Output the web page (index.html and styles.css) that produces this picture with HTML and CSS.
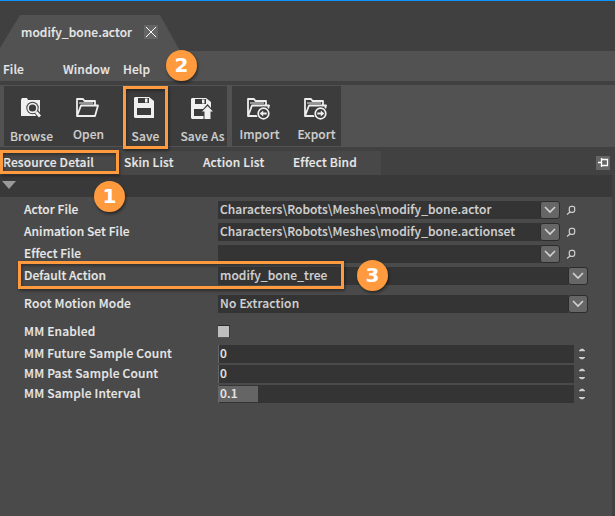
FILE: index.html
```html
<!DOCTYPE html>
<html lang="en">
<head>
<meta charset="utf-8">
<title>modify_bone.actor</title>
<link rel="stylesheet" href="styles.css">
</head>
<body>
<svg class="defs" width="0" height="0" aria-hidden="true">
  <symbol id="chevron" viewBox="0 0 20 18"><path d="M5 6l5 5 5-5" fill="none" stroke="#d2d2d2" stroke-width="1.6"/></symbol>
  <symbol id="search" viewBox="0 0 10 11"><rect x="3.300" y="1.300" width="5.400" height="6" rx="2" fill="none" stroke="#d0d0d0" stroke-width="1.200"/><path d="M4 7L1 9.500" stroke="#d0d0d0" stroke-width="1.200"/></symbol>
  <symbol id="spin" viewBox="0 0 6 12"><path d="M0 3.2V2.5L2 .8h2l2 1.7v.7zM0 9v.7l2 1.6h2l2-1.6V9z" fill="#cfcfcf"/></symbol>
  <symbol id="folder" viewBox="0 0 24 24"><path d="M2 20V3h6l1.500 2H20v4M2 20l4-10.500h17L20 20z" fill="none" stroke="#eee" stroke-width="1.800" stroke-linejoin="round"/><path d="M4 7h14" stroke="#eee" stroke-width="1"/></symbol>
  <symbol id="disk" viewBox="0 0 24 24"><path d="M3 2h14l5 4v17H3L2 22V3zM6 3v5h11V3zM5 13v7h14v-7z" fill="#f0f0f0" fill-rule="evenodd"/><path d="M13 3.500h2.500v4H13z" fill="#f0f0f0"/></symbol>
</svg>
<div class="app">
  <header class="titlebar">
    <div class="doc-tab"><span>modify_bone.actor</span><span class="close"><svg width="14" height="14"><path d="M2 2l10 10M12 2L2 12" stroke="#fff" stroke-width="1"/></svg></span></div>
  </header>
  <nav class="menu"><span class="m-file">File</span><span class="m-window">Window</span><span>Help</span><b class="badge badge-two">2</b></nav>
  <div class="toolbar">
    <div class="group wide">
      <div class="tool browse"><svg width="24" height="24" viewBox="0 0 24 24"><path d="M2 4l1-2h5l1 2h12v16H2z" fill="#f0f0f0"/><circle cx="13.5" cy="12" r="6.2" fill="#3c3c3c"/><path d="M17 15.5l4 5" stroke="#3c3c3c" stroke-width="5"/><circle cx="13.5" cy="12" r="4.4" fill="none" stroke="#f0f0f0" stroke-width="1.6"/><path d="M17 15.8l4 4.7" stroke="#f0f0f0" stroke-width="2.8"/></svg><span>Browse</span></div>
      <div class="tool raised"><svg width="24" height="24"><use href="#folder"/></svg><span>Open</span></div>
      <div class="tool save"><svg width="24" height="24"><use href="#disk"/></svg><span>Save</span><i class="mark mark-save"></i></div>
      <div class="tool"><svg width="24" height="24" viewBox="0 0 24 24"><use href="#disk"/><path d="M18.500 8l7 8h-3v8h-8v-8h-3z" fill="#3c3c3c"/><path d="M18.500 10l5.500 5.500h-2.500V23h-6v-7.500H13z" fill="#f0f0f0"/></svg><span>Save As</span></div>
    </div>
    <div class="group narrow">
      <div class="tool raised"><svg width="24" height="24" viewBox="0 0 24 24"><use href="#folder"/><circle cx="17.5" cy="17.5" r="7" fill="#3c3c3c"/><circle cx="17.5" cy="17.5" r="5.3" fill="none" stroke="#f0f0f0" stroke-width="1.7"/><path d="M13.7 17.5l3.5-3v2h3.5v2h-3.5v2z" fill="#f0f0f0"/></svg><span>Import</span></div>
      <div class="tool raised"><svg width="24" height="24" viewBox="0 0 24 24"><use href="#folder"/><circle cx="17.5" cy="17.5" r="7" fill="#3c3c3c"/><circle cx="17.5" cy="17.5" r="5.3" fill="none" stroke="#f0f0f0" stroke-width="1.7"/><path d="M21.3 17.5l-3.5-3v2h-3.5v2h3.5v2z" fill="#f0f0f0"/></svg><span>Export</span></div>
    </div>
  </div>
  <div class="tabs">
    <div class="tab t1">Resource Detail<i class="mark mark-tab"></i></div><div class="tab t2">Skin List</div><div class="tab t3">Action List</div><div class="tab t4">Effect Bind</div>
    <span class="pin"><svg width="14" height="14"><path d="M2 6.5h3M5.500 2v9M5 3.500h6.500v6M5 9.500h7" fill="none" stroke="#fff" stroke-width="1.300"/></svg></span>
  </div>
  <main class="panel">
    <div class="section"><svg width="14" height="8"><path d="M0 0h14L7 8z" fill="#999"/></svg><b class="badge badge-one">1</b></div>
    <div class="form">
      <div class="row"><label>Actor File</label><div class="field file">Characters\Robots\Meshes\modify_bone.actor</div><span class="drop"><svg width="20" height="18"><use href="#chevron"/></svg></span><svg class="find" width="10" height="11"><use href="#search"/></svg></div>
      <div class="row"><label>Animation Set File</label><div class="field file">Characters\Robots\Meshes\modify_bone.actionset</div><span class="drop"><svg width="20" height="18"><use href="#chevron"/></svg></span><svg class="find" width="10" height="11"><use href="#search"/></svg></div>
      <div class="row"><label>Effect File</label><div class="field file"></div><span class="drop"><svg width="20" height="18"><use href="#chevron"/></svg></span><svg class="find" width="10" height="11"><use href="#search"/></svg></div>
      <div class="row action"><label>Default Action</label><div class="field choice">modify_bone_tree</div><span class="drop"><svg width="20" height="18"><use href="#chevron"/></svg></span><i class="mark mark-action"></i><b class="badge badge-three">3</b></div>
      <div class="row motion"><label>Root Motion Mode</label><div class="field choice spaced">No Extraction</div><span class="drop"><svg width="20" height="18"><use href="#chevron"/></svg></span></div>
      <div class="row enabled"><label>MM Enabled</label><span class="check"></span></div>
      <div class="row number"><label>MM Future Sample Count</label><div class="field num">0</div><svg class="spin" width="6" height="12"><use href="#spin"/></svg></div>
      <div class="row number"><label>MM Past Sample Count</label><div class="field num">0</div><svg class="spin" width="6" height="12"><use href="#spin"/></svg></div>
      <div class="row number"><label>MM Sample Interval</label><div class="field num slider">0.1</div><svg class="spin" width="6" height="12"><use href="#spin"/></svg></div>
    </div>
  </main>
</div>
</body>
</html>
```

FILE: styles.css
```css
* { box-sizing: border-box; }
body { margin: 0; background: #404040; color: #e8e8e8; font: 500 12px/18px "Noto Sans CJK SC", "Noto Sans", sans-serif; letter-spacing: .08px; -webkit-text-stroke: .15px; white-space: nowrap; }
svg { display: block; flex: none; }
.defs { position: absolute; }
.app { width: 615px; height: 516px; overflow: hidden; display: flex; flex-direction: column; }
.titlebar { height: 51px; border-top: 1px solid #0a96ff; padding-top: 14px; background: #404040; flex: none; }
.doc-tab { width: 180px; height: 36px; padding: 0 0 2px 21px; display: flex; align-items: center; background: #525252; clip-path: polygon(20px 0, 160px 0, 180px 36px, 0 36px, 0 33px); }
.doc-tab span:first-child { width: 123px; }
.close { width: 14px; height: 14px; background: #656565; }
.menu { position: relative; height: 30px; flex: none; padding: 9px 0 0 3px; display: flex; background: #525252; }
.m-file { width: 60px; }
.m-window { width: 60px; }
.toolbar { height: 66px; flex: none; padding: 1px 0 0 4px; border-top: 4px solid #404040; background: #525252; display: flex; gap: 5px; }
.group { display: flex; height: 60px; background: #3c3c3c; color: #cfcfcf; }
.wide { width: 223px; }
.narrow { width: 109px; }
.tool { position: relative; width: 57px; flex: none; display: flex; flex-direction: column; align-items: center; padding-top: 10px; margin-left: -1px; margin-right: 1px; }
.tool svg { margin-left: -3px; }
.browse svg { margin-left: -1px; }
.tool span { margin-top: 7px; }
.raised span { margin-top: 5px; }
.save svg { margin-top: -1px; }
.save span { margin-top: 8px; }
.tabs { display: flex; height: 28px; flex: none; padding-top: 4px; background: #414141; position: relative; letter-spacing: .15px; }
.tab { background: #484848; height: 24px; line-height: 22px; padding-left: 3px; }
.t1 { width: 121px; }
.t2 { width: 79px; }
.t3 { width: 90px; }
.t4 { width: 91px; }
.pin { width: 14px; height: 14px; margin: 5px 5px 0 auto; background: #656565; }
.panel { flex: 1; width: 612px; background: #4a4a4a; }
.section { position: relative; height: 22px; padding: 6px 0 0 2px; background: #393939; }
.form { padding: 4px 0 0 24px; }
.row { position: relative; height: 18px; line-height: 16px; margin-bottom: 4px; display: flex; }
.row label { width: 194px; }
.motion, .enabled, .number { letter-spacing: .18px; }
.field { height: 18px; padding-left: 2px; background: #343434; color: #d2d2d2; }
.file { width: 324px; }
.choice { width: 351px; }
.num { width: 356px; color: #e8e8e8; border-left: 1px solid #656565; padding-left: 1px; }
.drop { width: 20px; height: 18px; background: #666; border-radius: 3px; box-shadow: inset 0 0 0 1px #2c2c2c; margin-left: -1px; }
.file + .drop { margin-left: -2px; }
.find { margin: 4px 0 0 6px; }
.action { margin-bottom: 10px; }
.motion { margin-bottom: 10px; }
.check { width: 12px; height: 13px; margin-top: 2px; background: #bebebe; border-top: 1px solid #2c2c2c; border-right: 1px solid #3a3a3a; border-bottom: 1px solid #555; }
.number { margin-bottom: 2px; }
.slider { background: linear-gradient(#656565, #656565) 0 1px / 39px 16px no-repeat #343434; }
.spin { margin: 3px 0 0 5px; }
.mark { position: absolute; border: 3px solid #ff9b3e; box-shadow: 1px 2px 3px #0006, inset 1px 2px 3px #0005; z-index: 1; }
.mark-save { left: 6px; top: 0; width: 45px; height: 63px; }
.mark-tab { left: 0; top: 3px; width: 119px; height: 24px; }
.mark-action { left: -6px; top: -6px; width: 326px; height: 28px; }
.badge { position: absolute; width: 31px; height: 31px; border-radius: 50%; background: #ff9b3e; color: #fff; font: bold 20px/31px "DejaVu Sans", sans-serif; letter-spacing: 0; -webkit-text-stroke: 0; text-align: center; box-shadow: 1px 2px 3px #0007; z-index: 2; }
.badge-one { left: 94px; top: 6px; }
.badge-two { left: 166px; top: -1px; }
.badge-three { left: 333px; top: -7px; }
```
